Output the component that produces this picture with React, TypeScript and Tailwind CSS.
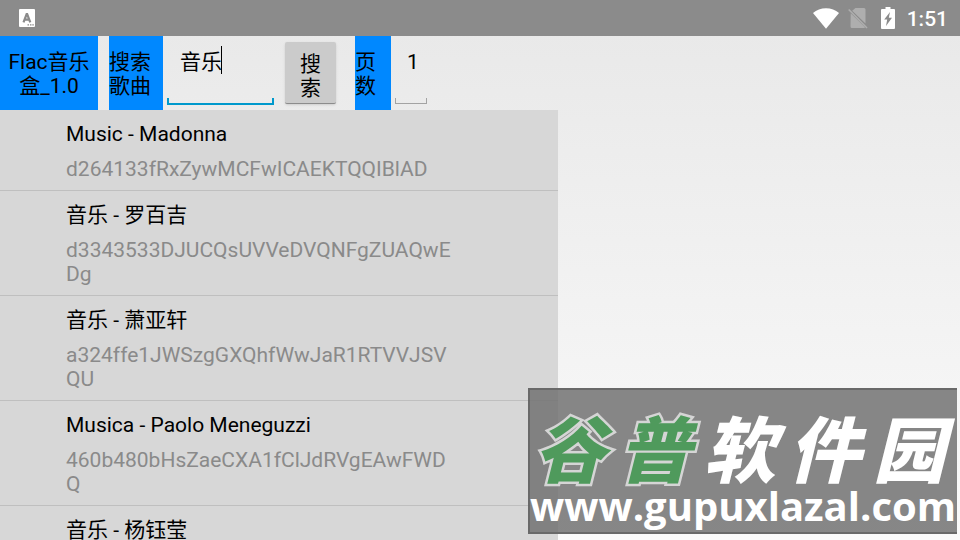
import React, { useState } from "react";

const songs = [
  { title: "Music - Madonna", hash: "d264133fRxZywMCFwICAEKTQQIBlAD" },
  { title: "音乐 - 罗百吉", hash: "d3343533DJUCQsUVVeDVQNFgZUAQwEDg" },
  { title: "音乐 - 萧亚轩", hash: "a324ffe1JWSzgGXQhfWwJaR1RTVVJSVQU" },
  { title: "Musica - Paolo Meneguzzi", hash: "460b480bHsZaeCXA1fClJdRVgEAwFWDQ" },
  { title: "音乐 - 杨钰莹", hash: "" },
];

const StatusBar: React.FC = () => (
  <div className="flex h-9 shrink-0 items-center justify-between bg-[#8b8b8b] pr-3 pl-[19px] text-white">
    {/* Keyboard notification */}
    <svg className="h-[18px] w-4" viewBox="0 0 16 18" aria-hidden="true">
      <rect width="16" height="18" rx="1" fill="#fff" />
      <path
        d="M4.500 13.300 7.900 4.500 11.300 13.300M5.900 10.600h4"
        fill="none"
        stroke="#8b8b8b"
        strokeWidth="2.200"
        strokeLinejoin="bevel"
      />
      <path d="M8.500 15.200H10v1.300H8.500zM11 15.200h1.500v1.300H11zM13.300 15.200h1.500v1.300h-1.500z" fill="#8b8b8b" />
    </svg>
    <div className="flex items-center">
      <svg className="h-[21px] w-[26px]" viewBox="0 0 26 21" aria-hidden="true">
        <path d="M0 5C3.5 2 8 .3 13 .3S22.500 2 26 5L13 20.700z" fill="#fff" />
      </svg>
      <svg className="ml-[9px] h-[21px] w-5" viewBox="0 0 20 21" aria-hidden="true">
        <path
          d="M7.500 0H16a1.500 1.500 0 0 1 1.500 1.500V15.500L4.200 2.800zM2.700 5.300 17 19.200a1.500 1.500 0 0 1-1 .8H4a1.500 1.500 0 0 1-1.500-1.500z"
          fill="#aeaeae"
        />
        <path d="M.7 1.500 19 20" stroke="#aeaeae" strokeWidth="1.600" />
      </svg>
      <svg className="ml-[13px] h-[22px] w-[14px]" viewBox="0 0 14 22" aria-hidden="true">
        <path
          d="M4.500 0h5v2H13a1 1 0 0 1 1 1v18a1 1 0 0 1-1 1H1a1 1 0 0 1-1-1V3a1 1 0 0 1 1-1h3.500z"
          fill="#fff"
        />
        <path d="M9 5 3.200 12.500h3L5 19l6-8.200H7.800z" fill="#8b8b8b" />
      </svg>
      <span className="ml-3 pt-px text-[21px] leading-6 font-medium">1:51</span>
    </div>
  </div>
);

const SearchBar: React.FC = () => {
  const [keyword, setKeyword] = useState("音乐");
  const [page, setPage] = useState("1");

  return (
    <form
      className="flex h-[74px] shrink-0 items-stretch"
      onSubmit={(e) => e.preventDefault()}
    >
      <h1 className="flex w-[98px] items-center justify-center bg-[#0088ff] pt-0.5 text-center">
        <span>
          Flac音乐
          <br />
          盒_1.0
        </span>
      </h1>
      <label
        htmlFor="keyword"
        className="ml-[11px] flex w-[54px] items-center bg-[#0088ff] pt-0.5 pr-3"
      >
        搜索歌曲
      </label>
      <div className="relative ml-1 flex w-[107px] flex-col justify-between pt-[10px] pb-[5px]">
        <input
          id="keyword"
          className="h-7 w-full bg-transparent px-[13px] caret-transparent outline-none"
          value={keyword}
          onChange={(e) => setKeyword(e.target.value)}
        />
        <span className="absolute top-[10px] left-[54px] h-7 w-px bg-black" />
        <div className="h-[7px] border-x-2 border-b-2 border-[#0099cc]" />
      </div>
      <button
        type="submit"
        className="my-[6px] ml-[11px] w-[51px] rounded-xs border-b border-[#8c8c8c] bg-[#cbcbcb] px-[15px] pt-[6px] shadow-sm"
      >
        搜索
      </button>
      <label
        htmlFor="page"
        className="ml-[19px] flex w-9 items-center bg-[#0088ff] pt-0.5 pr-3"
      >
        页数
      </label>
      <div className="ml-1 flex w-8 flex-col justify-between pt-3 pb-[6px]">
        <input
          id="page"
          className="h-7 w-full bg-transparent pl-3 outline-none"
          value={page}
          onChange={(e) => setPage(e.target.value)}
        />
        <div className="h-[6px] border-x border-b border-[#a3a3a3]" />
      </div>
    </form>
  );
};

const Watermark: React.FC = () => (
  <div className="absolute right-[3px] bottom-[6px] flex h-[146px] w-[429px] flex-col border-t-2 border-b-2 border-l-2 border-[#666666]/90 bg-[#727272]/85 pt-[18px] font-bold text-white">
    <div className="flex h-[76px] justify-between pr-3 pl-1 font-['Noto_Sans_CJK_SC',sans-serif] text-[72px] leading-[76px] font-black italic">
      {["谷", "普"].map((char) => (
        <span
          key={char}
          className="text-[#4f9a5c] [-webkit-text-stroke:5px_#d5d5d5] [paint-order:stroke_fill]"
        >
          {char}
        </span>
      ))}
      {["软", "件", "园"].map((char) => (
        <span key={char}>{char}</span>
      ))}
    </div>
    <div className="font-['Open_Sans',sans-serif] text-[40px] leading-[44px] whitespace-nowrap">
      www.gupuxlazal.com
    </div>
  </div>
);

const App: React.FC = () => {
  return (
    <div className="relative flex h-screen flex-col overflow-hidden bg-linear-to-b from-[#e8e8e8] to-[#fafafa] font-[Roboto,'Noto_Sans_CJK_SC',sans-serif] text-[21px] leading-6 text-black">
      <StatusBar />
      <SearchBar />
      <main className="grid min-h-0 flex-1 grid-cols-[93fr_67fr]">
        <ul className="overflow-hidden bg-[#d7d7d7]">
          {songs.map((song) => (
            <li
              key={song.title}
              className="border-b border-[#bfbfbf] pt-3 pr-[102px] pb-[9px] pl-[66px]"
            >
              <p>{song.title}</p>
              <p className="mt-[11px] break-all text-[#8a8a8a]">{song.hash}</p>
            </li>
          ))}
        </ul>
      </main>
      <Watermark />
    </div>
  );
};

export default App;
